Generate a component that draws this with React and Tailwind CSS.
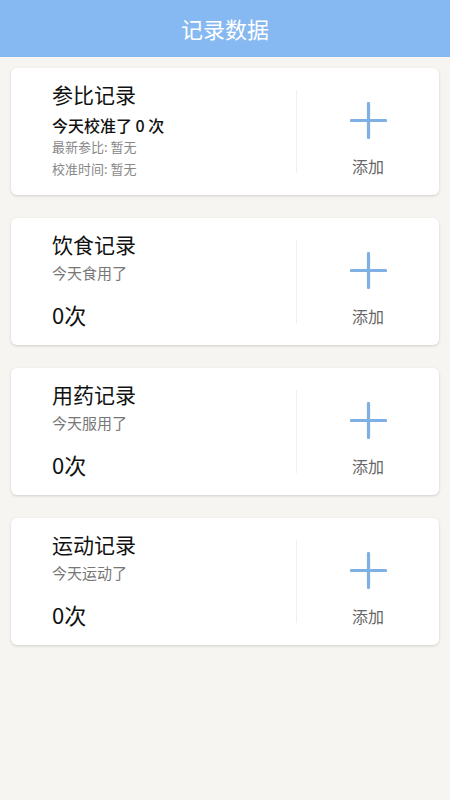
import React from "react";

const FONT = { fontFamily: '"Noto Sans CJK SC", "Noto Sans", sans-serif' };

const records = [
  { key: "cal", title: "参比记录", kind: "cal" },
  { key: "diet", title: "饮食记录", sub: "今天食用了", count: "0次" },
  { key: "med", title: "用药记录", sub: "今天服用了", count: "0次" },
  { key: "sport", title: "运动记录", sub: "今天运动了", count: "0次" },
];

function PlusIcon() {
  return (
    <svg width="37" height="37" viewBox="0 0 37 37" fill="none">
      <path d="M18.5 1.5v34M1.5 18.5h34" stroke="#7eb0e4" strokeWidth="3.2" strokeLinecap="round" />
    </svg>
  );
}

function RecordCard({ item }) {
  return (
    <div className="mx-[11px] h-[127px] bg-white rounded-[6px] shadow-[0_1px_3px_rgba(0,0,0,0.16)] flex">
      <div className="flex-1 pl-[41px] flex flex-col">
        <div className="mt-[12px] text-[21px] leading-[28px] text-[#111]">{item.title}</div>
        {item.kind === "cal" ? (
          <>
            <div className="mt-[6px] text-[16px] leading-[22px] font-medium text-[#111]">今天校准了 0 次</div>
            <div className="text-[13px] leading-[22px] text-[#888]">最新参比: 暂无</div>
            <div className="text-[13px] leading-[22px] text-[#888]">校准时间: 暂无</div>
          </>
        ) : (
          <>
            <div className="mt-[4px] text-[15px] leading-[22px] text-[#777]">{item.sub}</div>
            <div className="mt-[15px] text-[22px] leading-[30px] text-[#111]">{item.count}</div>
          </>
        )}
      </div>
      <div className="self-center h-[83px] w-px bg-[#efefef]" />
      <div className="w-[142px] flex flex-col items-center">
        <div className="mt-[34px]">
          <PlusIcon />
        </div>
        <div className="mt-[16px] text-[16px] leading-[22px] text-[#666]">添加</div>
      </div>
    </div>
  );
}

export default function App() {
  return (
    <div className="min-h-[800px] bg-[#f7f5f2]" style={FONT}>
      <div className="h-[57px] bg-[#86b8f1] flex items-center justify-center">
        <span className="text-[22px] text-white">记录数据</span>
      </div>
      <div className="pt-[11px] flex flex-col gap-[23px]">
        {records.map((item) => (
          <RecordCard key={item.key} item={item} />
        ))}
      </div>
    </div>
  );
}
